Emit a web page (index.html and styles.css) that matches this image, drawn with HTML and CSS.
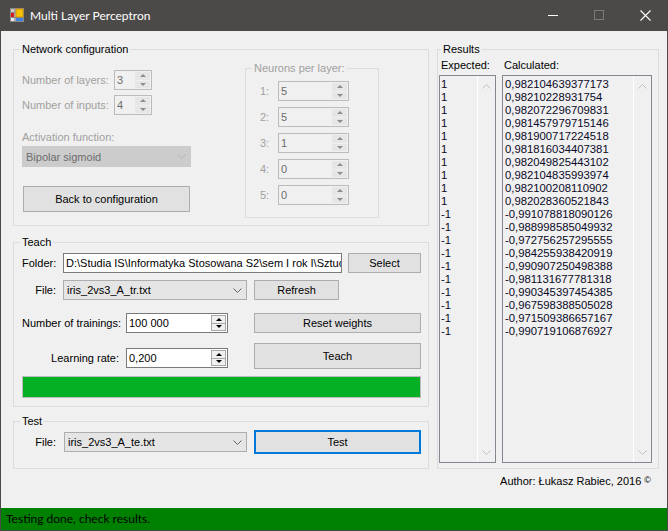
FILE: index.html
```html
<!DOCTYPE html>
<html lang="pl">
<head>
<meta charset="utf-8">
<title>Multi Layer Perceptron</title>
<link rel="stylesheet" href="styles.css">
</head>
<body>
<div class="window">
  <header class="titlebar">
    <svg class="app-icon" width="14" height="14" viewBox="0 0 14 14">
      <rect x="0.5" y="0.5" width="13" height="13" fill="#c8c8c8" stroke="#8a8a8a"/>
      <line x1="5" y1="0" x2="5" y2="14" stroke="#8a8a8a"/>
      <line x1="0" y1="4.5" x2="5" y2="4.5" stroke="#8a8a8a"/>
      <line x1="0" y1="9.5" x2="14" y2="9.5" stroke="#8a8a8a"/>
      <rect x="6" y="1" width="7" height="8" fill="#f5c400" stroke="#d08a00" stroke-width="0.8"/>
      <rect x="1" y="5" width="3" height="4" fill="#d81c1c"/>
      <rect x="6" y="10" width="7" height="3" fill="#3c82e0"/>
      <rect x="1" y="10" width="3" height="3" fill="#e8e8e8"/>
    </svg>
    <span class="title">Multi Layer Perceptron</span>
    <div class="caption-btns">
      <span class="cbtn"><svg width="10" height="10" viewBox="0 0 10 10"><line x1="0" y1="5.5" x2="10" y2="5.5" stroke="#ffffff"/></svg></span>
      <span class="cbtn"><svg width="10" height="10" viewBox="0 0 10 10"><rect x="0.5" y="0.5" width="9" height="9" fill="none" stroke="#7c7a78"/></svg></span>
      <span class="cbtn"><svg width="11" height="11" viewBox="0 0 11 11"><path d="M0.5 0.5 L10.5 10.5 M10.5 0.5 L0.5 10.5" stroke="#ffffff" stroke-width="1.1" fill="none"/></svg></span>
    </div>
  </header>

  <main class="client">
    <div class="left">
      <fieldset class="group net">
        <legend>Network configuration</legend>
        <div class="cfg">
          <div class="cfg-left">
            <div class="row-num">
              <span class="lbl-92 dis">Number of layers:</span>
              <div class="num dis w38"><span class="val">3</span><span class="spin"><i class="up"></i><i class="dn"></i></span></div>
            </div>
            <div class="row-num">
              <span class="lbl-92 dis">Number of inputs:</span>
              <div class="num dis w38"><span class="val">4</span><span class="spin"><i class="up"></i><i class="dn"></i></span></div>
            </div>
            <div class="act-label dis">Activation function:</div>
            <div class="combo dis w169">
              <span class="ctext">Bipolar sigmoid</span>
              <svg class="chev" width="9" height="5" viewBox="0 0 9 5"><polyline points="0.5,0.5 4.5,4.5 8.5,0.5" fill="none" stroke="#b4b4b4"/></svg>
            </div>
            <button class="btn back">Back to configuration</button>
          </div>
          <fieldset class="group neurons">
            <legend class="dis">Neurons per layer:</legend>
            <div class="nrow"><span class="nlbl">1:</span><div class="num dis w71"><span class="val">5</span><span class="spin"><i class="up"></i><i class="dn"></i></span></div></div>
            <div class="nrow"><span class="nlbl">2:</span><div class="num dis w71"><span class="val">5</span><span class="spin"><i class="up"></i><i class="dn"></i></span></div></div>
            <div class="nrow"><span class="nlbl">3:</span><div class="num dis w71"><span class="val">1</span><span class="spin"><i class="up"></i><i class="dn"></i></span></div></div>
            <div class="nrow"><span class="nlbl">4:</span><div class="num dis w71"><span class="val">0</span><span class="spin"><i class="up"></i><i class="dn"></i></span></div></div>
            <div class="nrow"><span class="nlbl">5:</span><div class="num dis w71"><span class="val">0</span><span class="spin"><i class="up"></i><i class="dn"></i></span></div></div>
          </fieldset>
        </div>
      </fieldset>

      <fieldset class="group teach">
        <legend>Teach</legend>
        <div class="teach-body">
          <div class="row h20">
            <span class="lbl-41">Folder:</span>
            <div class="textbox w279">D:\Studia IS\Informatyka Stosowana S2\sem I rok I\Sztuc</div>
            <button class="btn select">Select</button>
          </div>
          <div class="row h20 mt7">
            <span class="lbl-41">File:</span>
            <div class="combo w184">
              <span class="ctext">iris_2vs3_A_tr.txt</span>
              <svg class="chev" width="9" height="5" viewBox="0 0 9 5"><polyline points="0.5,0.5 4.5,4.5 8.5,0.5" fill="none" stroke="#606060"/></svg>
            </div>
            <button class="btn refresh">Refresh</button>
          </div>
          <div class="row h20 mt13">
            <span class="lbl-104">Number of trainings:</span>
            <div class="num w102"><span class="val">100 000</span><span class="spin"><i class="up"></i><i class="dn"></i></span></div>
            <button class="btn wide reset">Reset weights</button>
          </div>
          <div class="row learn">
            <span class="lbl-104">Learning rate:</span>
            <div class="num w102"><span class="val">0,200</span><span class="spin"><i class="up"></i><i class="dn"></i></span></div>
            <button class="btn wide teachbtn">Teach</button>
          </div>
          <div class="progress"><div class="fill" style="width:100%"></div></div>
        </div>
      </fieldset>

      <fieldset class="group test">
        <legend>Test</legend>
        <div class="test-body">
          <div class="row h24">
            <span class="lbl-41">File:</span>
            <div class="combo w183">
              <span class="ctext">iris_2vs3_A_te.txt</span>
              <svg class="chev" width="9" height="5" viewBox="0 0 9 5"><polyline points="0.5,0.5 4.5,4.5 8.5,0.5" fill="none" stroke="#606060"/></svg>
            </div>
            <button class="btn wide testbtn">Test</button>
          </div>
        </div>
      </fieldset>
    </div>

    <div class="right">
      <fieldset class="group results">
        <legend>Results</legend>
        <div class="res-body">
          <div class="col exp">
            <div class="col-label">Expected:</div>
            <div class="list">
              <div class="items">
                <div>1</div><div>1</div><div>1</div><div>1</div><div>1</div>
                <div>1</div><div>1</div><div>1</div><div>1</div><div>1</div>
                <div>-1</div><div>-1</div><div>-1</div><div>-1</div><div>-1</div>
                <div>-1</div><div>-1</div><div>-1</div><div>-1</div><div>-1</div>
              </div>
              <div class="vscroll">
                <svg width="9" height="5" viewBox="0 0 9 5"><polyline points="0.5,4.5 4.5,0.5 8.5,4.5" fill="none" stroke="#c2c2c2"/></svg>
                <svg width="9" height="5" viewBox="0 0 9 5"><polyline points="0.5,0.5 4.5,4.5 8.5,0.5" fill="none" stroke="#c2c2c2"/></svg>
              </div>
            </div>
          </div>
          <div class="col calc">
            <div class="col-label">Calculated:</div>
            <div class="list">
              <div class="items">
                <div>0,982104639377173</div>
                <div>0,98210228931754</div>
                <div>0,982072296709831</div>
                <div>0,981457979715146</div>
                <div>0,981900717224518</div>
                <div>0,981816034407381</div>
                <div>0,982049825443102</div>
                <div>0,982104835993974</div>
                <div>0,982100208110902</div>
                <div>0,982028360521843</div>
                <div>-0,991078818090126</div>
                <div>-0,988998585049932</div>
                <div>-0,972756257295555</div>
                <div>-0,984255938420919</div>
                <div>-0,990907250498388</div>
                <div>-0,981131677781318</div>
                <div>-0,990345397454385</div>
                <div>-0,967598388505028</div>
                <div>-0,971509386657167</div>
                <div>-0,990719106876927</div>
              </div>
              <div class="vscroll">
                <svg width="9" height="5" viewBox="0 0 9 5"><polyline points="0.5,4.5 4.5,0.5 8.5,4.5" fill="none" stroke="#c2c2c2"/></svg>
                <svg width="9" height="5" viewBox="0 0 9 5"><polyline points="0.5,0.5 4.5,4.5 8.5,0.5" fill="none" stroke="#c2c2c2"/></svg>
              </div>
            </div>
          </div>
        </div>
      </fieldset>
      <div class="author">Author: Łukasz Rabiec, 2016 <span class="copy">©</span></div>
    </div>
  </main>

  <footer class="status">Testing done, check results.</footer>
</div>
</body>
</html>
```

FILE: styles.css
```css
html, body {
  margin: 0;
  padding: 0;
}
body {
  width: 668px;
  height: 531px;
  overflow: hidden;
  font-family: "Liberation Sans", Arial, sans-serif;
  font-size: 11px;
  color: #000;
  background: #f0f0f0;
}
.window {
  width: 668px;
  height: 531px;
  box-sizing: border-box;
  border: 1px solid #4c4a48;
  border-top: 0;
  display: flex;
  flex-direction: column;
  background: #f0f0f0;
}

/* title bar */
.titlebar {
  height: 31px;
  flex: none;
  margin: 0 -1px;
  background: #4c4a48;
  display: flex;
  align-items: center;
}
.app-icon {
  margin-left: 10px;
  margin-top: -1px;
  display: block;
}
.title {
  margin-left: 6px;
  color: #ffffff;
  font-family: Lato, "Liberation Sans", sans-serif;
  font-size: 12px;
  margin-top: -1px;
}
.caption-btns {
  margin-left: auto;
  display: flex;
  height: 31px;
}
.cbtn {
  width: 46px;
  display: flex;
  align-items: center;
  justify-content: center;
  margin-top: -1px;
}
.cbtn svg { display: block; }

/* client area */
.client {
  flex: 1;
  display: flex;
  padding: 12px 0 0 12px;
}
.left {
  width: 416px;
  display: flex;
  flex-direction: column;
}
.right {
  width: 222px;
  margin-left: 8px;
}

/* group boxes */
fieldset.group {
  margin: 0;
  padding: 0;
  border: 1px solid #dcdcdc;
  min-width: 0;
  box-sizing: border-box;
}
fieldset.group > legend {
  padding: 0 2px;
  margin-left: 6px;
  line-height: 13px;
  height: 13px;
  font-size: 11px;
}
.dis { color: #a0a0a0; }

fieldset.net { height: 183px; }
fieldset.teach { height: 171px; margin-top: 10px; }
fieldset.test { height: 54px; margin-top: 8px; }

/* network config */
.cfg {
  display: flex;
  align-items: flex-start;
  padding-left: 8px;
}
.cfg-left {
  width: 169px;
  padding-top: 14px;
}
.row-num {
  display: flex;
  align-items: center;
  height: 20px;
}
.row-num + .row-num { margin-top: 5px; }
.lbl-92 { width: 92px; }
.act-label {
  margin-top: 16px;
  line-height: 13px;
  height: 13px;
}

/* numeric up-down */
.num {
  display: flex;
  height: 20px;
  box-sizing: border-box;
  border: 1px solid #7a7a7a;
  background: #ffffff;
}
.num .val {
  flex: 1;
  padding-left: 2px;
  line-height: 18px;
  white-space: nowrap;
  overflow: hidden;
}
.num .spin {
  width: 15px;
  margin: 1px 1px 1px 0;
  display: flex;
  flex-direction: column;
  gap: 0;
}
.num .spin i {
  flex: 1;
  display: flex;
  align-items: center;
  justify-content: center;
  background: #f0f0f0;
  border: 1px solid #a8a8a8;
  box-sizing: border-box;
}
.num .spin i + i { border-top: 0; }
.num .spin i::after {
  content: "";
  width: 0;
  height: 0;
  border-left: 3px solid transparent;
  border-right: 3px solid transparent;
}
.num .spin i.up::after { border-bottom: 3px solid #000; }
.num .spin i.dn::after { border-top: 3px solid #000; }

.num.dis {
  border-color: #bcbcbc;
  background: #f0f0f0;
}
.num.dis .val { color: #6d6d6d; }
.num.dis .spin { gap: 1px; }
.num.dis .spin i {
  border: 0;
  background: #e6e6e6;
}
.num.dis .spin i.up::after { border-bottom-color: #8c8c8c; }
.num.dis .spin i.dn::after { border-top-color: #8c8c8c; }

.w38 { width: 38px; }
.w71 { width: 71px; }
.w102 { width: 102px; }

/* combo box */
.combo {
  display: flex;
  align-items: center;
  height: 20px;
  box-sizing: border-box;
  border: 1px solid #adadad;
  background: #e5e5e5;
}
.combo .ctext {
  flex: 1;
  padding-left: 3px;
  white-space: nowrap;
  overflow: hidden;
}
.combo .chev {
  display: block;
  margin-right: 4px;
}
.combo.dis {
  height: 21px;
  margin-top: 2px;
  background: #cccccc;
  border-color: #cccccc;
}
.combo.dis .ctext { color: #6d6d6d; }
.w169 { width: 169px; }
.w184 { width: 184px; }
.w183 { width: 183px; margin-left: 1px; }

/* buttons */
.btn {
  font-family: "Liberation Sans", Arial, sans-serif;
  font-size: 11px;
  color: #000;
  background: #e1e1e1;
  border: 1px solid #adadad;
  padding: 0;
  margin: 0;
  box-sizing: border-box;
  height: 20px;
}
.btn.back {
  display: block;
  margin-top: 19px;
  margin-left: 1px;
  width: 167px;
  height: 26px;
}

/* neurons */
fieldset.group.neurons {
  margin-left: 54px;
  margin-top: 6px;
  width: 134px;
  height: 156px;
  padding: 6px 0 0 14px;
}
fieldset.group.neurons > legend { margin-left: -8px; }
.nrow {
  display: flex;
  align-items: center;
  height: 20px;
}
.nrow + .nrow { margin-top: 6px; }
.nlbl {
  width: 18px;
  color: #a0a0a0;
}

/* teach */
.teach-body { padding: 4px 0 0 8px; }
.row {
  display: flex;
  align-items: center;
}
.h20 { height: 20px; }
.h24 { height: 24px; }
.mt7 { margin-top: 7px; }
.mt13 { margin-top: 13px; }
.lbl-41 {
  width: 41px;
  padding-right: 7px;
  box-sizing: border-box;
  text-align: right;
  white-space: nowrap;
}
.lbl-104 {
  width: 104px;
  padding-right: 7px;
  box-sizing: border-box;
  text-align: right;
  white-space: nowrap;
}
.textbox {
  height: 20px;
  box-sizing: border-box;
  border: 1px solid #7a7a7a;
  background: #ffffff;
  padding-left: 2px;
  line-height: 18px;
  white-space: nowrap;
  overflow: hidden;
}
.w279 { width: 279px; }
.btn.select { width: 73px; margin-left: 6px; }
.btn.refresh { width: 85px; margin-left: 7px; }
.btn.wide { width: 167px; margin-left: 26px; }
.btn.reset { margin-top: -1px; }
.row.learn {
  margin-top: 10px;
  align-items: flex-start;
  height: 26px;
}
.row.learn .lbl-104 {
  margin-top: 5px;
  line-height: 20px;
}
.row.learn .num { margin-top: 5px; }
.btn.teachbtn { height: 26px; }
.progress {
  margin-top: 7px;
  width: 399px;
  height: 22px;
  box-sizing: border-box;
  border: 1px solid #bcbcbc;
  background: #e6e6e6;
}
.progress .fill {
  height: 100%;
  background: #06b025;
}

/* test */
.test-body { padding: 2px 0 0 8px; }
.btn.testbtn {
  margin-left: 7px;
  height: 24px;
  border: 2px solid #0078d7;
}

/* results */
fieldset.results {
  height: 426px;
}
fieldset.group.results > legend { margin-left: 3px; }
.res-body {
  display: flex;
  padding-left: 1px;
}
.col-label {
  margin-top: 3px;
  line-height: 13px;
  height: 13px;
  padding-left: 2px;
}
.col.exp { width: 57px; }
.col.calc { width: 150px; margin-left: 6px; }
.list {
  margin-top: 3px;
  height: 388px;
  box-sizing: border-box;
  border: 1px solid #828790;
  background: #f0f0f0;
  display: flex;
}
.items {
  flex: 1;
  padding-top: 2px;
  line-height: 13px;
  color: #0a0a28;
  white-space: nowrap;
  overflow: hidden;
  font-size: 11.3px;
}
.exp .items { padding-left: 1px; }
.calc .items { padding-left: 2px; }
.vscroll {
  width: 17px;
  border-left: 1px solid #ffffff;
  display: flex;
  flex-direction: column;
  align-items: center;
  justify-content: space-between;
  padding: 8px 0 7px;
}
.vscroll svg { display: block; }
.author {
  margin-top: 5px;
  padding-right: 8px;
  text-align: right;
  line-height: 13px;
  color: #000;
}
.author .copy {
  font-size: 9px;
  vertical-align: 2px;
}

/* status bar */
.status {
  flex: none;
  height: 22px;
  line-height: 22px;
  background: #008000;
  padding-left: 5px;
  color: #000;
  font-family: Lato, "Liberation Sans", sans-serif;
  font-size: 12px;
}
```
